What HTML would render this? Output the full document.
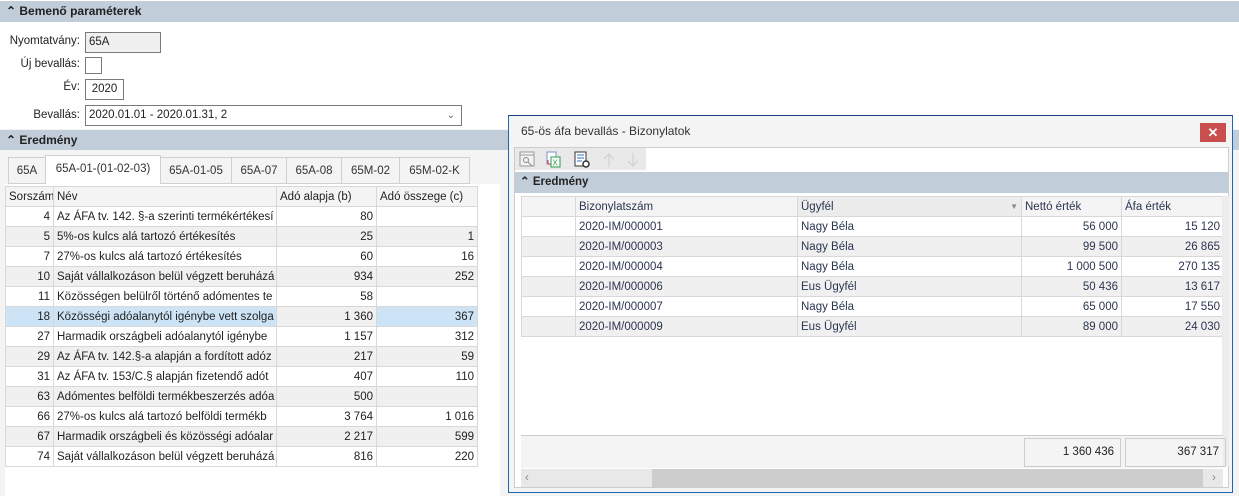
<!DOCTYPE html><html><head><meta charset="utf-8"><style>
*{box-sizing:border-box;margin:0;padding:0}
body{width:1239px;height:496px;position:relative;overflow:hidden;background:#fff;font-family:"Segoe UI","Liberation Sans",sans-serif;font-size:11.5px;color:#222}
.a{position:absolute}
.hdr{position:absolute;left:0;width:1239px;background:#c1cdd9;font-weight:bold;font-size:12px;padding-left:6px;line-height:20px}
.lbl{position:absolute;text-align:right;width:80px;left:0}
.box{position:absolute;border:1px solid #7a7a7a;background:#fff;padding-left:3px;line-height:19px}
.tab{position:absolute;top:157px;height:27px;border:1px solid #d0d0d0;background:#f4f4f4;text-align:center;line-height:26px;color:#333}
table{border-collapse:collapse;position:absolute;table-layout:fixed}
td{border:1px solid #d8d8d8;height:20px;padding:0 3px;white-space:nowrap;overflow:hidden;line-height:18px}
.r{text-align:right}
</style></head><body>
<div class="hdr" style="top:1px;height:21px">&#8963; Bemenő paraméterek</div>
<div class="lbl" style="top:35px">Nyomtatvány:</div>
<div class="box" style="left:85px;top:32px;width:76px;height:21px;background:#f0f0f0">65A</div>
<div class="lbl" style="top:58px">Új bevallás:</div>
<div class="box" style="left:85px;top:57px;width:17px;height:17px"></div>
<div class="lbl" style="top:81px">Év:</div>
<div class="box" style="left:85px;top:79px;width:39px;height:21px;text-align:center;padding:0">2020</div>
<div class="lbl" style="top:109px">Bevallás:</div>
<div class="box" style="left:85px;top:105px;width:377px;height:21px">2020.01.01 - 2020.01.31, 2<span style="position:absolute;right:6px;top:0;color:#666;font-size:10px">&#8964;</span></div>
<div class="a" style="left:0;top:129px;width:1239px;height:367px;background:#f4f4f4"></div>
<div class="hdr" style="top:130px;height:20px">&#8963; Eredmény</div>
<div class="tab" style="left:8px;width:38px">65A</div>
<div class="tab" style="left:45px;width:116px;background:#fff;border-bottom-color:#fff;top:155px;height:30px">65A-01-(01-02-03)</div>
<div class="tab" style="left:160px;width:72px">65A-01-05</div>
<div class="tab" style="left:231px;width:56px">65A-07</div>
<div class="tab" style="left:286px;width:56px">65A-08</div>
<div class="tab" style="left:341px;width:59px">65M-02</div>
<div class="tab" style="left:399px;width:71px">65M-02-K</div>
<div class="a" style="left:5px;top:184px;width:495px;height:312px;background:#fff"></div>
<table style="left:5px;top:186px;width:472px">
<colgroup><col style="width:48px"><col style="width:223px"><col style="width:100px"><col style="width:101px"></colgroup>
<tr style="background:#f4f4f4"><td>Sorszám</td><td>Név</td><td>Adó alapja (b)</td><td>Adó összege (c)</td></tr>
<tr><td class="r">4</td><td>Az ÁFA tv. 142. §-a szerinti termékértékesí</td><td class="r">80</td><td></td></tr>
<tr style="background:#f0f0f0"><td class="r">5</td><td>5%-os kulcs alá tartozó értékesítés</td><td class="r">25</td><td class="r">1</td></tr>
<tr><td class="r">7</td><td>27%-os kulcs alá tartozó értékesítés</td><td class="r">60</td><td class="r">16</td></tr>
<tr style="background:#f0f0f0"><td class="r">10</td><td>Saját vállalkozáson belül végzett beruházá</td><td class="r">934</td><td class="r">252</td></tr>
<tr><td class="r">11</td><td>Közösségen belülről történő adómentes te</td><td class="r">58</td><td></td></tr>
<tr style="background:#cde4f7"><td class="r">18</td><td>Közösségi adóalanytól igénybe vett szolga</td><td class="r" style="background:#f0f0f0">1 360</td><td class="r">367</td></tr>
<tr><td class="r">27</td><td>Harmadik országbeli adóalanytól igénybe</td><td class="r">1 157</td><td class="r">312</td></tr>
<tr style="background:#f0f0f0"><td class="r">29</td><td>Az ÁFA tv. 142.§-a alapján a fordított adóz</td><td class="r">217</td><td class="r">59</td></tr>
<tr><td class="r">31</td><td>Az ÁFA tv. 153/C.§ alapján fizetendő adót</td><td class="r">407</td><td class="r">110</td></tr>
<tr style="background:#f0f0f0"><td class="r">63</td><td>Adómentes belföldi termékbeszerzés adóa</td><td class="r">500</td><td></td></tr>
<tr><td class="r">66</td><td>27%-os kulcs alá tartozó belföldi termékb</td><td class="r">3 764</td><td class="r">1 016</td></tr>
<tr style="background:#f0f0f0"><td class="r">67</td><td>Harmadik országbeli és közösségi adóalar</td><td class="r">2 217</td><td class="r">599</td></tr>
<tr><td class="r">74</td><td>Saját vállalkozáson belül végzett beruházá</td><td class="r">816</td><td class="r">220</td></tr>
</table>

<div class="a" style="left:508px;top:115px;width:725px;height:378px;background:#f4f4f4;border:1px solid #1d66b5;border-top-color:#1f3f7a">
<div class="a" style="left:12px;top:8px;font-size:12px;color:#333">65-ös áfa bevallás - Bizonylatok</div>
<div class="a" style="left:691px;top:7px;width:26px;height:19px;background:#c94f4f;color:#fff;text-align:center;line-height:19px;font-weight:bold;font-size:13px">✕</div>
<div class="a" style="left:5px;top:31px;width:715px;height:341px;border:1px solid #ccc;background:#fff">
 <div class="a" style="left:0;top:0;width:131px;height:22px;background:#e9e9e9"></div>
 <svg class="a" style="left:4px;top:3px" width="130" height="18">
  <rect x="1" y="1" width="14" height="14" fill="#f4f4f4" stroke="#999"/><line x1="1" y1="4" x2="15" y2="4" stroke="#999"/><circle cx="7" cy="9" r="2.5" fill="none" stroke="#888"/><line x1="9" y1="11" x2="13" y2="15" stroke="#888"/>
  <rect x="28" y="1" width="9" height="12" fill="#fff" stroke="#7a96c8"/><rect x="32" y="6" width="9" height="10" fill="#fff" stroke="#2a9d4a"/><text x="33.5" y="14.5" font-size="8" fill="#2a9d4a" font-family="Liberation Sans">X</text><path d="M29 9v4h3" stroke="#d33" fill="none"/>
  <rect x="56" y="1" width="11" height="14" fill="#fff" stroke="#333"/><path d="M58 4h7M58 7h7M58 10h5" stroke="#2d6fc4"/><circle cx="67" cy="13" r="3" fill="#fff" stroke="#333" stroke-width="1.5"/>
  <path d="M90 16V3M85 8l5-5 5 5" stroke="#ccc" fill="none"/><path d="M114 2v13M109 10l5 5 5-5" stroke="#ccc" fill="none"/>
 </svg>
 <div class="a" style="left:0;top:24px;width:713px;height:21px;background:#c1cdd9;font-weight:bold;line-height:21px;padding-left:5px">&#8963; Eredmény</div>
 <table style="left:6px;top:48px;width:702px;color:#2a3550">
 <colgroup><col style="width:54px"><col style="width:222px"><col style="width:224px"><col style="width:100px"><col style="width:102px"></colgroup>
 <tr style="background:#f4f4f4"><td></td><td>Bizonylatszám</td><td style="background:#ececec">Ügyfél<span style="float:right;font-size:8px;color:#888">▼</span></td><td>Nettó érték</td><td>Áfa érték</td></tr>
 <tr><td></td><td>2020-IM/000001</td><td>Nagy Béla</td><td class="r">56 000</td><td class="r">15 120</td></tr>
 <tr style="background:#f0f0f0"><td></td><td>2020-IM/000003</td><td>Nagy Béla</td><td class="r">99 500</td><td class="r">26 865</td></tr>
 <tr><td></td><td>2020-IM/000004</td><td>Nagy Béla</td><td class="r">1 000 500</td><td class="r">270 135</td></tr>
 <tr style="background:#f0f0f0"><td></td><td>2020-IM/000006</td><td>Eus Ügyfél</td><td class="r">50 436</td><td class="r">13 617</td></tr>
 <tr><td></td><td>2020-IM/000007</td><td>Nagy Béla</td><td class="r">65 000</td><td class="r">17 550</td></tr>
 <tr style="background:#f0f0f0"><td></td><td>2020-IM/000009</td><td>Eus Ügyfél</td><td class="r">89 000</td><td class="r">24 030</td></tr>
 </table>
 <div class="a" style="left:707px;top:48px;width:7px;height:270px;background:#ececec"></div>
 <div class="a" style="left:6px;top:287px;width:702px;height:33px;background:#f4f4f4;border-top:1px solid #ccc"></div>
 <div class="a" style="left:509px;top:290px;width:97px;height:29px;border:1px solid #ccc;text-align:right;padding-right:6px;line-height:27px">1 360 436</div>
 <div class="a" style="left:610px;top:290px;width:101px;height:29px;border:1px solid #ccc;text-align:right;padding-right:6px;line-height:27px">367 317</div>
 <div class="a" style="left:6px;top:321px;width:702px;height:18px;background:#e8e8e8"></div>
 <div class="a" style="left:137px;top:321px;width:551px;height:18px;background:#cdcdcd"></div>
 <div class="a" style="left:10px;top:321px;color:#888;line-height:18px">‹</div>
 <div class="a" style="left:697px;top:321px;color:#888;line-height:18px">›</div>
</div>
</div>
</body></html>
